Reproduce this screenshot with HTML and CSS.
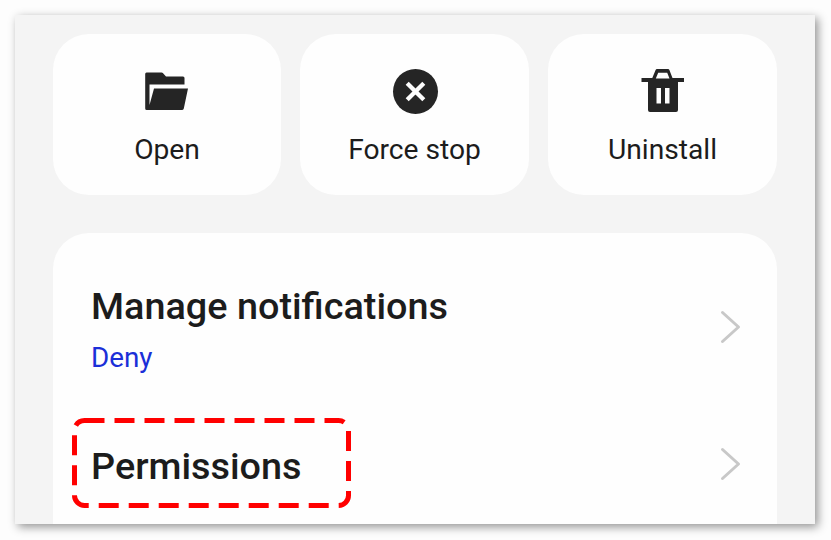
FILE: index.html
```html
<!DOCTYPE html>
<html lang="en">
<head>
<meta charset="utf-8">
<title>App info</title>
<link rel="stylesheet" href="styles.css">
</head>
<body>
<main class="panel">
  <section class="actions">
    <button class="action">
      <svg class="icon" width="48" height="48" viewBox="0 0 48 48"><path fill="#252525" d="M3.500 4.500H18.500q1 0 1.800 1L23 8.500H40q1.500 0 1.500 1.500V16.500H6.500V37L11 20.500H45L40.800 40.500q-.4 1.500-2 1.500H3.700Q2.200 42 2.200 40.500V6Q2.200 4.500 3.500 4.500z"/></svg>
      <span class="label">Open</span>
    </button>
    <button class="action">
      <svg class="icon" width="48" height="48" viewBox="0 0 48 48"><circle cx="24.500" cy="23.500" r="22.500" fill="#252525"/><path d="M16.200 15.200l16.600 16.600M32.800 15.200L16.200 31.800" stroke="#fdfdfd" stroke-width="4.300"/></svg>
      <span class="label">Force stop</span>
    </button>
    <button class="action">
      <svg class="icon" width="48" height="48" viewBox="0 0 48 48"><path fill="#252525" fill-rule="evenodd" d="M18 1h11q1 0 1.400 1l3.100 8H45v4h-6v28q0 2-2 2H11q-2 0-2-2V14H2.500v-4h10.800L16.600 2Q17 1 18 1zM19.200 4.800L16.800 10.500H30.500L28.200 4.800zM17.500 20v15.500h4.500V20zM26 20v15.500h4.500V20z"/></svg>
      <span class="label">Uninstall</span>
    </button>
  </section>
  <section class="settings">
    <div class="row row-first">
      <div class="copy">
        <h2 class="title">Manage notifications</h2>
        <p class="value">Deny</p>
      </div>
      <svg class="chevron" width="22" height="36" viewBox="0 0 22 36"><path d="M3.500 3.500L19.500 18 3.500 32.500"/></svg>
    </div>
    <div class="row row-second">
      <h2 class="title">Permissions</h2>
      <svg class="chevron" width="22" height="36" viewBox="0 0 22 36"><path d="M3.500 3.500L19.500 18 3.500 32.500"/></svg>
      <svg class="highlight" width="279" height="90" viewBox="0 0 279 90"><rect x="2.500" y="2.500" width="274" height="85" rx="10"/></svg>
    </div>
  </section>
</main>
</body>
</html>
```
FILE: styles.css
```css
* { box-sizing: border-box; }

body {
  margin: 0;
  padding: 15px;
  height: 540px;
  overflow: hidden;
  background: #fdfdfd;
  font-family: Roboto, "Liberation Sans", sans-serif;
  color: #1c1c1c;
}

.panel {
  display: flex;
  flex-direction: column;
  width: 800px;
  height: 509px;
  padding: 19px 38px 0;
  background: #f4f4f4;
  box-shadow: 3px 3px 9px rgba(0, 0, 0, .42);
}

.actions {
  display: grid;
  grid-template-columns: 228px 229px 229px;
  column-gap: 19px;
  height: 161px;
}

.action {
  display: flex;
  flex-direction: column;
  align-items: center;
  padding: 34px 0 0;
  border: 0;
  border-radius: 36px;
  background: #fefefe;
  color: inherit;
  font: inherit;
}

.icon { display: block; }

.label {
  margin-top: 17px;
  font-size: 28.2px;
  line-height: 34px;
}

.settings {
  flex: 1;
  margin-top: 38px;
  padding: 0 36px 0 38px;
  border-radius: 36px 36px 0 0;
  background: #fefefe;
}

.row {
  display: flex;
  align-items: center;
  justify-content: space-between;
}

.row-first { height: 187px; }

.row-second {
  position: relative;
  height: 87px;
}

.copy { padding-top: 5px; }

.title {
  margin: 0;
  font-size: 37.8px;
  font-weight: 500;
  line-height: 46px;
}

.row-second .title { padding-top: 5px; }

.value {
  margin: 12px 0 0;
  color: #1b2fd8;
  font-size: 27.8px;
  line-height: 34px;
}

.chevron path {
  fill: none;
  stroke: #c8c8c8;
  stroke-width: 3;
  stroke-linecap: round;
  stroke-linejoin: round;
}

.highlight {
  position: absolute;
  left: -19px;
  top: -2px;
  fill: none;
  stroke: #f00;
  stroke-width: 5;
  stroke-dasharray: 20 10;
}
```
